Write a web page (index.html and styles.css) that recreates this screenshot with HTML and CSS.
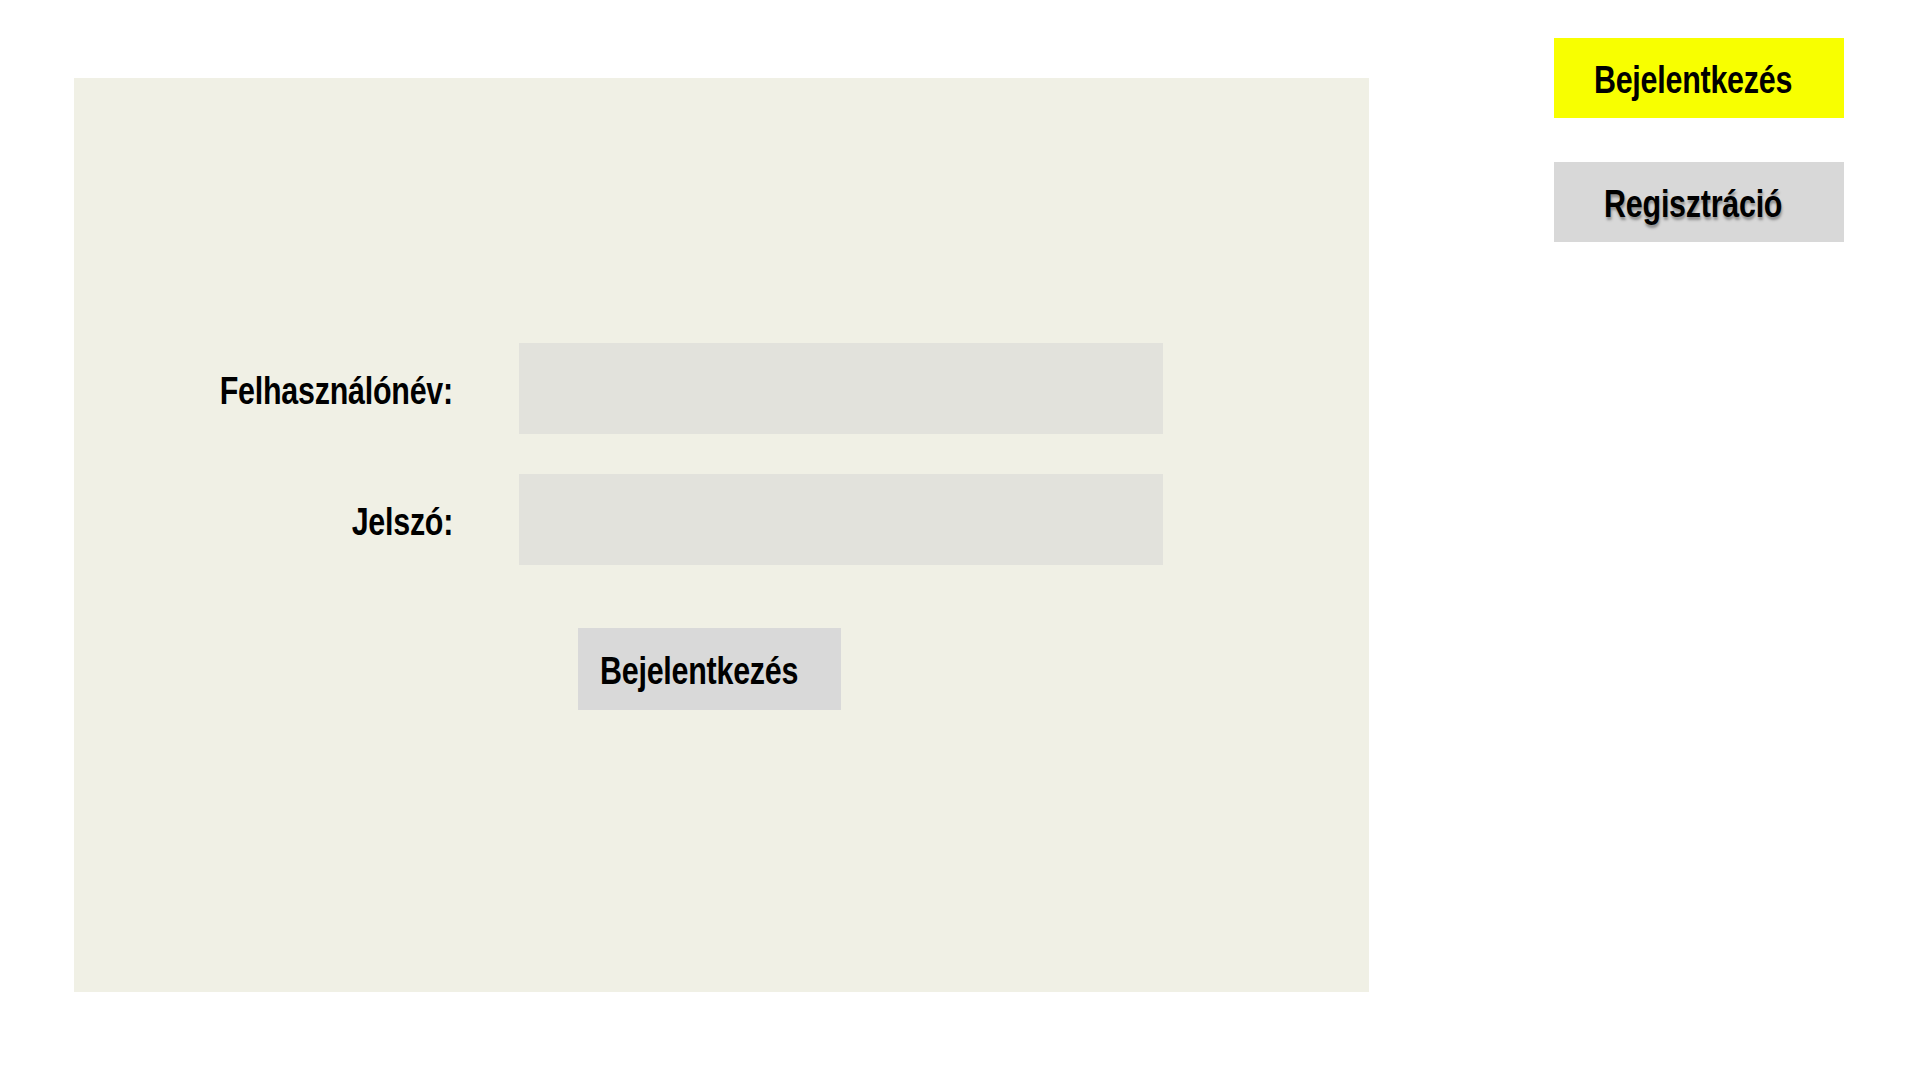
FILE: index.html
```html
<!DOCTYPE html>
<html lang="hu">
<head>
<meta charset="utf-8">
<title>Bejelentkezés</title>
<link rel="stylesheet" href="styles.css">
</head>
<body>
<div class="page">
  <main class="panel">
    <form class="login-form">
      <label class="label" for="user"><span class="txt txt-right">Felhasználónév:</span></label>
      <div class="input" id="user"></div>
      <label class="label" for="pass"><span class="txt txt-right">Jelszó:</span></label>
      <div class="input" id="pass"></div>
      <div class="submit-cell">
        <div class="submit"><span class="txt txt-left">Bejelentkezés</span></div>
      </div>
    </form>
  </main>
  <nav class="side">
    <div class="nav-btn nav-login"><span class="txt">Bejelentkezés</span></div>
    <div class="nav-btn nav-reg"><span class="txt">Regisztráció</span></div>
  </nav>
</div>
</body>
</html>
```

FILE: styles.css
```css
html, body {
  margin: 0;
  padding: 0;
  background: #ffffff;
}
body {
  font-family: "Liberation Sans", Arial, sans-serif;
  font-weight: bold;
  color: #000;
}
.txt {
  display: inline-block;
  font-size: 39px;
  line-height: 1;
  letter-spacing: -0.3px;
  transform: scaleX(0.78);
  transform-origin: center;
  white-space: nowrap;
}
.txt-right {
  transform-origin: right center;
}
.txt-left {
  transform-origin: left center;
}
.page {
  display: flex;
  align-items: flex-start;
  width: 1920px;
  height: 1081px;
}
.panel {
  margin-left: 74px;
  margin-top: 78px;
  width: 1295px;
  height: 914px;
  flex: none;
  background: #f0f0e5;
  box-sizing: border-box;
  padding-top: 265px;
  padding-left: 56px;
}
.login-form {
  display: grid;
  grid-template-columns: 323px 644px;
  column-gap: 66px;
  row-gap: 40px;
  align-items: center;
}
.label {
  text-align: right;
  padding-top: 4px;
}
.input {
  height: 91px;
  background: #e2e2dc;
}
.submit-cell {
  grid-column: 2;
  margin-top: 23px;
  padding-left: 59px;
}
.submit {
  width: 263px;
  height: 82px;
  box-sizing: border-box;
  background: #d9d9d9;
  display: flex;
  align-items: center;
  padding-left: 22px;
  padding-top: 2px;
}
.side {
  margin-left: 185px;
  margin-top: 38px;
  display: flex;
  flex-direction: column;
  gap: 44px;
}
.nav-btn {
  width: 290px;
  height: 80px;
  display: flex;
  align-items: center;
  justify-content: center;
  padding-right: 12px;
  padding-top: 2px;
  box-sizing: border-box;
}
.nav-login {
  background: #f8ff00;
}
.nav-reg {
  background: #d8d8d8;
  text-shadow: 1px 3px 3px rgba(0, 0, 0, 0.35);
}
```
